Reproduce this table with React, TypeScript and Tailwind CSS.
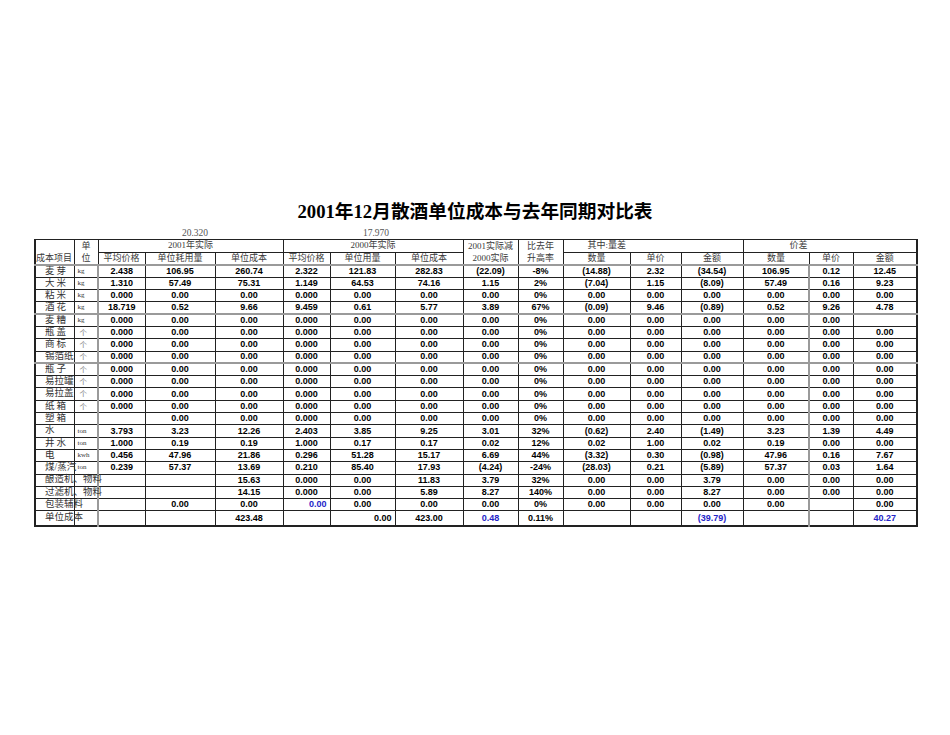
type Cell = string | { t: string; blue?: boolean; right?: boolean };

type Row = { name: string; unit: string; cells: Cell[]; grayTop?: boolean; tall?: boolean };

const zeros: Cell[] = ["0.000", "0.00", "0.00", "0.000", "0.00", "0.00", "0.00", "0%", "0.00", "0.00", "0.00", "0.00", "0.00", "0.00"];

const rows: Row[] = [
  { name: "麦芽", unit: "kg", grayTop: true, cells: ["2.438", "106.95", "260.74", "2.322", "121.83", "282.83", "(22.09)", "-8%", "(14.88)", "2.32", "(34.54)", "106.95", "0.12", "12.45"] },
  { name: "大米", unit: "kg", cells: ["1.310", "57.49", "75.31", "1.149", "64.53", "74.16", "1.15", "2%", "(7.04)", "1.15", "(8.09)", "57.49", "0.16", "9.23"] },
  { name: "粘米", unit: "kg", cells: zeros },
  { name: "酒花", unit: "kg", cells: ["18.719", "0.52", "9.66", "9.459", "0.61", "5.77", "3.89", "67%", "(0.09)", "9.46", "(0.89)", "0.52", "9.26", "4.78"] },
  { name: "麦糟", unit: "kg", grayTop: true, cells: ["0.000", "0.00", "0.00", "0.000", "0.00", "0.00", "0.00", "0%", "0.00", "0.00", "0.00", "0.00", "0.00", ""] },
  { name: "瓶盖", unit: "个", cells: zeros },
  { name: "商标", unit: "个", cells: zeros },
  { name: "锡箔纸", unit: "个", cells: zeros },
  { name: "瓶子", unit: "个", grayTop: true, cells: zeros },
  { name: "易拉罐", unit: "个", cells: zeros },
  { name: "易拉盖", unit: "个", cells: zeros },
  { name: "纸箱", unit: "个", cells: zeros },
  { name: "塑箱", unit: "", cells: ["", "0.00", "0.00", "0.000", "0.00", "0.00", "0.00", "0%", "0.00", "0.00", "0.00", "0.00", "0.00", "0.00"] },
  { name: "水", unit: "ton", cells: ["3.793", "3.23", "12.26", "2.403", "3.85", "9.25", "3.01", "32%", "(0.62)", "2.40", "(1.49)", "3.23", "1.39", "4.49"] },
  { name: "井水", unit: "ton", cells: ["1.000", "0.19", "0.19", "1.000", "0.17", "0.17", "0.02", "12%", "0.02", "1.00", "0.02", "0.19", "0.00", "0.00"] },
  { name: "电", unit: "kwh", cells: ["0.456", "47.96", "21.86", "0.296", "51.28", "15.17", "6.69", "44%", "(3.32)", "0.30", "(0.98)", "47.96", "0.16", "7.67"] },
  { name: "煤/蒸汽", unit: "ton", cells: ["0.239", "57.37", "13.69", "0.210", "85.40", "17.93", "(4.24)", "-24%", "(28.03)", "0.21", "(5.89)", "57.37", "0.03", "1.64"] },
  { name: "酿造机、物料", unit: "", cells: ["", "", "15.63", "0.000", "0.00", "11.83", "3.79", "32%", "0.00", "0.00", "3.79", "0.00", "0.00", "0.00"] },
  { name: "过滤机、物料", unit: "", cells: ["", "", "14.15", "0.000", "0.00", "5.89", "8.27", "140%", "0.00", "0.00", "8.27", "0.00", "0.00", "0.00"] },
  { name: "包装辅料", unit: "", cells: ["", "0.00", "0.00", { t: "0.00", blue: true, right: true }, "0.00", "0.00", "0.00", "0%", "0.00", "0.00", "0.00", "0.00", "", "0.00"] },
  { name: "单位成本", unit: "", tall: true, cells: ["", "", "423.48", "", { t: "0.00", right: true }, "423.00", { t: "0.48", blue: true }, "0.11%", "", "", { t: "(39.79)", blue: true }, "", "", { t: "40.27", blue: true }] },
];

const widths = [39, 24, 47, 70, 68, 47, 65, 68, 55, 45, 67, 51, 62, 66, 44, 64];

const serif = "font-['Liberation_Serif','Noto_Sans_CJK_SC',serif]";
const td = "border border-[#222] p-0 leading-none whitespace-nowrap";
const head = `${td} ${serif} text-[9px] text-[#3a3a3a] text-center font-normal`;

function DataCell({ c, i, grayTop }: { c: Cell; i: number; grayTop?: boolean }) {
  const cell = typeof c === "string" ? { t: c } : c;
  const grayLeft = i === 0 || i === 12 ? "border-l-2 border-l-[#9a9a9a]" : "";
  return (
    <td
      className={`${td} ${grayLeft} ${grayTop ? "border-t-2 border-t-[#9a9a9a]" : ""} font-['Liberation_Sans',Arial,sans-serif] font-bold text-[9px] ${
        cell.right ? "text-right pr-[3px]" : "text-center"
      } ${cell.blue ? "text-[#2424c8]" : "text-black"}`}
    >
      {cell.t}
    </td>
  );
}

export default function App() {
  return (
    <div className="w-[950px] h-[735px] bg-white pt-[202px]">
      <h1 className="h-[19px] text-center text-[18.7px] leading-[19px] font-bold text-black font-['Liberation_Serif','Noto_Sans_CJK_SC',serif]">
        2001年12月散酒单位成本与去年同期对比表
      </h1>

      <div className={`ml-[34px] mt-[7px] flex h-[11px] text-[9.5px] leading-[11px] text-[#555] ${serif}`}>
        <div className="w-[180px] pr-[6px] text-right">20.320</div>
        <div className="w-[180px] pr-[5px] text-right">17.970</div>
      </div>

      <table className="ml-[34px] w-[882px] table-fixed border-collapse border-l-2 border-r-2 border-b-2 border-[#222]">
        <colgroup>
          {widths.map((w, i) => (
            <col key={i} style={{ width: w }} />
          ))}
        </colgroup>
        <tbody>
          <tr className="h-[12px]">
            <td rowSpan={2} className={`${head} align-bottom text-left pb-[1px] text-[9.5px]`}>
              成本项目
            </td>
            <td rowSpan={2} className={head}>
              <div className="h-[12px] leading-[12px]">单</div>
              <div className="h-[12px] leading-[12px]">位</div>
            </td>
            <td colSpan={3} className={head}>2001年实际</td>
            <td colSpan={3} className={head}>2000年实际</td>
            <td rowSpan={2} className={head}>
              <div className="h-[12px] leading-[12px]">2001实际减</div>
              <div className="h-[12px] leading-[12px]">2000实际</div>
            </td>
            <td rowSpan={2} className={head}>
              <div className="h-[12px] leading-[12px]">比去年</div>
              <div className="h-[12px] leading-[12px]">升高率</div>
            </td>
            <td colSpan={3} className={`${head} !text-left pl-[24px]`}>其中:量差</td>
            <td colSpan={3} className={`${head} !text-left pl-[46px]`}>价差</td>
          </tr>
          <tr className="h-[12px]">
            {["平均价格", "单位耗用量", "单位成本", "平均价格", "单位用量", "单位成本"].map((h, i) => (
              <td key={i} className={head}>{h}</td>
            ))}
            {["数量", "单价", "金额", "数量", "单价", "金额"].map((h, i) => (
              <td key={i} className={head}>{h}</td>
            ))}
          </tr>
          {rows.map((r) => (
            <tr key={r.name} className={r.tall ? "h-[15px]" : "h-[12.3px]"}>
              <td
                className={`${td} ${serif} text-[9.5px] text-[#333] text-left pl-[9px] ${
                  r.name.length === 2 ? "tracking-[2px]" : ""
                } ${r.grayTop ? "border-t-2 border-t-[#9a9a9a]" : ""}`}
              >
                {r.name}
              </td>
              <td
                className={`${td} text-left ${
                  r.unit === "个"
                    ? "font-['Noto_Sans_CJK_SC',sans-serif] text-[7.5px] text-[#777] pl-[5px]"
                    : `${serif} text-[7px] text-[#333] pl-[3px]`
                } ${r.grayTop ? "border-t-2 border-t-[#9a9a9a]" : ""}`}
              >
                {r.unit}
              </td>
              {r.cells.map((c, i) => (
                <DataCell key={i} c={c} i={i} grayTop={r.grayTop} />
              ))}
            </tr>
          ))}
        </tbody>
      </table>
    </div>
  );
}
